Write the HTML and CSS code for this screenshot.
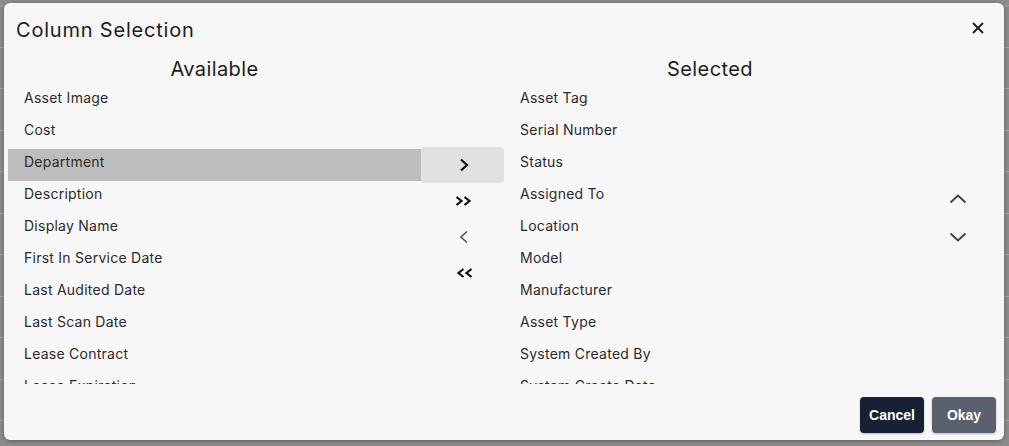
FILE: index.html
```html
<!DOCTYPE html>
<html>
<head>
<meta charset="utf-8">
<link rel="stylesheet" href="styles.css">
</head>
<body>
<div class="modal">
  <div class="header">
    <h1 class="title">Column Selection</h1>
    <button class="close" aria-label="Close">
      <svg width="12" height="12" viewBox="0 0 12 12"><path d="M1 1L11 11M11 1L1 11" stroke="#1a1a1a" stroke-width="1.8" fill="none"/></svg>
    </button>
  </div>
  <div class="content">
    <div class="col">
      <div class="col-title">Available</div>
      <ul class="list">
        <li>Asset Image</li>
        <li>Cost</li>
        <li class="sel">Department</li>
        <li>Description</li>
        <li>Display Name</li>
        <li>First In Service Date</li>
        <li>Last Audited Date</li>
        <li>Last Scan Date</li>
        <li>Lease Contract</li>
        <li>Lease Expiration</li>
        <li>Lease Number</li>
      </ul>
    </div>
    <div class="mid">
      <button class="mbtn active"><svg width="12" height="14" viewBox="0 0 12 14"><path d="M3 1.5L9 7L3 12.5" stroke="#111" stroke-width="2.2" fill="none"/></svg></button>
      <button class="mbtn"><svg width="18" height="10" viewBox="0 0 18 10"><path d="M1.5 1L6.5 5L1.5 9M9.5 1L14.5 5L9.5 9" stroke="#111" stroke-width="2.2" fill="none"/></svg></button>
      <button class="mbtn"><svg width="12" height="14" viewBox="0 0 12 14"><path d="M9 1.5L3 7L9 12.5" stroke="#555" stroke-width="1.6" fill="none"/></svg></button>
      <button class="mbtn"><svg width="18" height="10" viewBox="0 0 18 10"><path d="M8.5 1L3.5 5L8.5 9M16.5 1L11.5 5L16.5 9" stroke="#111" stroke-width="2.2" fill="none"/></svg></button>
    </div>
    <div class="col">
      <div class="col-title">Selected</div>
      <ul class="list">
        <li>Asset Tag</li>
        <li>Serial Number</li>
        <li>Status</li>
        <li>Assigned To</li>
        <li>Location</li>
        <li>Model</li>
        <li>Manufacturer</li>
        <li>Asset Type</li>
        <li>System Created By</li>
        <li>System Create Date</li>
        <li>System Last Update</li>
      </ul>
    </div>
    <div class="order">
      <button class="obtn"><svg width="18" height="10" viewBox="0 0 18 10"><path d="M1.5 8.5L9 1.5L16.5 8.5" stroke="#444" stroke-width="2" fill="none"/></svg></button>
      <button class="obtn"><svg width="18" height="10" viewBox="0 0 18 10"><path d="M1.5 1.5L9 8.5L16.5 1.5" stroke="#444" stroke-width="2" fill="none"/></svg></button>
    </div>
  </div>
  <div class="footer">
    <button class="btn cancel">Cancel</button>
    <button class="btn okay">Okay</button>
  </div>
</div>
</body>
</html>
```
FILE: styles.css
```css
html, body {
  margin: 0;
  padding: 0;
}
body {
  width: 1009px;
  height: 446px;
  overflow: hidden;
  background-color: #8b8b8b;
  background-image: repeating-linear-gradient(to bottom, transparent 0px, transparent 5px, #a2a2a2 5px, #a2a2a2 6px, transparent 6px, transparent 41.5px);
  font-family: Inter, "Noto Sans", sans-serif;
  padding-top: 3px;
  padding-left: 4px;
  box-sizing: border-box;
}
.modal {
  width: 1000px;
  height: 437px;
  background: #f7f7f7;
  border-radius: 6px;
  box-shadow: 0 1px 4px rgba(0,0,0,0.35);
  display: flex;
  flex-direction: column;
  overflow: hidden;
}
.header {
  height: 50px;
  display: flex;
  align-items: flex-start;
  justify-content: space-between;
  padding: 0 20px 0 12px;
  box-sizing: border-box;
}
.title {
  margin: 15px 0 0 0;
  font-size: 20px;
  line-height: 24px;
  font-weight: 400;
  color: #1d1d1d;
  letter-spacing: 0.8px;
}
.close {
  margin-top: 19px;
  border: 0;
  background: transparent;
  padding: 0;
  width: 12px;
  height: 12px;
  display: flex;
}
.content {
  display: grid;
  grid-template-columns: 413px 83px 412px 1fr;
  padding-left: 4px;
  height: 331px;
}
.col {
  display: flex;
  flex-direction: column;
  min-width: 0;
}
.col-title {
  height: 32px;
  text-align: center;
  font-size: 20px;
  line-height: 32px;
  color: #1d1d1d;
  letter-spacing: 0.4px;
}
.list {
  list-style: none;
  margin: 0;
  padding: 0;
  height: 299px;
  overflow: hidden;
}
.list li {
  height: 32px;
  line-height: 25px;
  padding-left: 16px;
  font-size: 14px;
  color: #2b2b2b;
  letter-spacing: 0.25px;
  white-space: nowrap;
}
.list li.sel {
  background: #bdbdbd;
}
.mid {
  display: flex;
  flex-direction: column;
  padding-top: 94px;
}
.mbtn {
  height: 36px;
  border: 0;
  background: transparent;
  border-radius: 3px;
  display: flex;
  align-items: center;
  justify-content: center;
  padding: 0 0 0 2px;
}
.mbtn.active {
  background: #e1e1e1;
}
.order {
  display: flex;
  flex-direction: column;
  padding-top: 127px;
  padding-right: 4px;
}
.obtn {
  height: 38px;
  border: 0;
  background: transparent;
  display: flex;
  align-items: center;
  justify-content: center;
  padding: 0;
}
.footer {
  display: flex;
  justify-content: flex-end;
  gap: 8px;
  padding: 13px 8px 0 0;
}
.btn {
  width: 64px;
  height: 36px;
  border: 0;
  border-radius: 4px;
  color: #fff;
  font-family: "Liberation Sans", Arial, sans-serif;
  font-weight: 700;
  font-size: 14px;
  box-shadow: 0 1px 2px rgba(0,0,0,0.25);
}
.cancel {
  background: #182033;
}
.okay {
  background: #5b606f;
}
```
